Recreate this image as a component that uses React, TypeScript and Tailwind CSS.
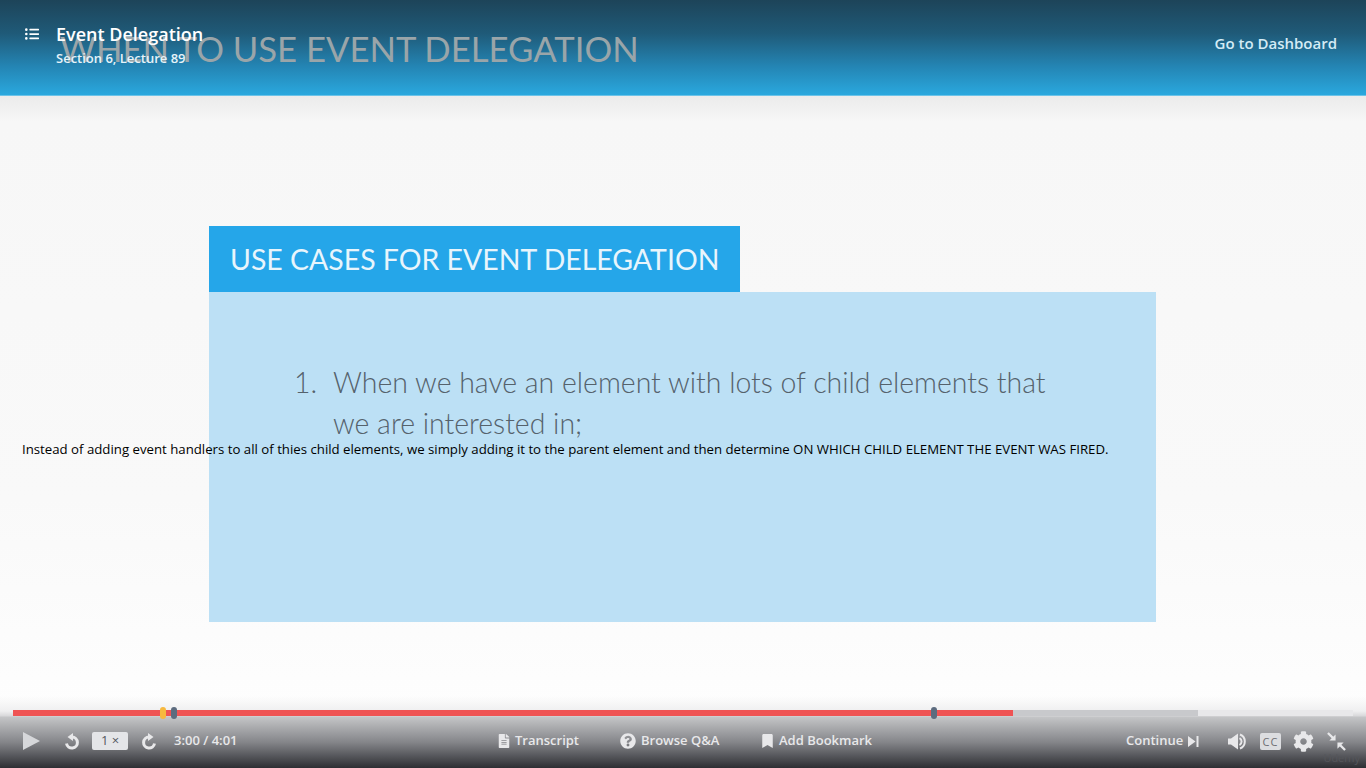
import React from 'react';
import { FaListUl, FaFileAlt, FaQuestionCircle, FaBookmark, FaCog } from 'react-icons/fa';

const sans = "font-['Open_Sans','Noto_Sans',sans-serif]";
const lato = "font-['Lato','Open_Sans',sans-serif]";

const Marker = ({ color, left }: { color: string; left: string }) => <span className={`absolute top-[-3px] w-[6px] h-[12px] rounded-[3px] ${color} ${left}`} />;

const ReplayIcon = ({ className }: { className: string }) => <svg viewBox="0 0 16 17" className={className} fill="none">
    <path d="M8 4 A5.5 5.5 0 1 1 2.5 10.5" stroke="#e8e8ea" strokeWidth="3" />
    <path d="M9 0 V8 L3.5 4 Z" fill="#e8e8ea" />
  </svg>;

const App = () => {
  return <div className={`relative w-[1366px] h-[768px] overflow-hidden flex flex-col bg-[#fafafa] ${sans}`}>
      <header className="relative h-[96px] shrink-0 flex items-start justify-between bg-[linear-gradient(to_bottom,#1d4459_0%,#1f5a78_35%,#2485b4_70%,#2aa8de_100%)] border-b border-[#6cc3e8]">
        <div className={`absolute left-[60px] top-[26px] text-[34.7px] leading-[45px] text-[#9aa5a9] whitespace-nowrap ${lato}`}>WHEN TO USE EVENT DELEGATION</div>
        <div className="relative flex pl-[25px] pt-[23px]">
          <FaListUl className="text-white w-[14px] h-[14px] mt-[4px]" />
          <div className="ml-[17px]">
            <div className="text-[18px] leading-[22px] font-semibold text-white">Event Delegation</div>
            <div className="text-[13px] leading-[16px] mt-[5px] font-semibold text-[#e6f3f9]">Section 6, Lecture 89</div>
          </div>
        </div>
        <div className="relative pr-[29px] pt-[33px] text-[15px] leading-[20px] font-semibold text-[#d4ebf5]">Go to Dashboard</div>
      </header>

      <main className="flex-1 pl-[209px] pt-[130px] bg-[linear-gradient(to_bottom,#ebebeb_0px,#f7f7f7_26px,#f9f9f9_60%,#ffffff_100%)]">
        <div className={`w-[531px] h-[66px] bg-[#25a6e9] flex items-center pl-[21px] text-[28.45px] text-[#e8f5fc] whitespace-nowrap ${lato}`}>USE CASES FOR EVENT DELEGATION</div>
        <div className={`w-[947px] h-[330px] bg-[#bce0f5] pt-[70px] pl-[85px] flex text-[28.45px] leading-[41px] font-light text-[#55626c] ${lato}`}>
          <span className="w-[39px]">1.</span>
          <p className="whitespace-nowrap">When we have an element with lots of child elements that<br />we are interested in;</p>
        </div>
      </main>

      <div className="absolute left-[22px] top-[440px] text-[13.22px] leading-[18px] text-black whitespace-nowrap font-['Open_Sans',sans-serif]">
        Instead of adding event handlers to all of thies child elements, we simply adding it to the parent element and then determine ON WHICH CHILD ELEMENT THE EVENT WAS FIRED.
      </div>

      <footer className="absolute left-0 right-0 bottom-0 h-[72px] bg-[linear-gradient(to_bottom,rgba(255,255,255,0)_0px,#efeff0_15px,#d8d8da_20px,#c4c5c7_21px,#85868a_46px,#2d2e33_72px)]">
        <div className="relative mx-[13px] mt-[14px] h-[6px] flex bg-[#e8e8ea]">
          <div className="w-[1000px] bg-[#ef5353]" />
          <div className="w-[185px] bg-[#c8c9cc]" />
          <Marker color="bg-[#f7b93e]" left="left-[147px]" />
          <Marker color="bg-[#5c6b7e]" left="left-[158px]" />
          <Marker color="bg-[#5c6b7e]" left="left-[918px]" />
        </div>

        <div className="flex items-center h-[20px] mt-[15px] pl-[23px] text-[#e8e8ea] text-[13px] font-semibold">
          <svg viewBox="0 0 17 20" className="w-[17px] h-[20px]"><path d="M0 1 L17 10 L0 19 Z" fill="#d6d7da" /></svg>
          <ReplayIcon className="ml-[24px] w-[16px] h-[17px]" />
          <div className="ml-[12px] w-[36px] h-[18px] rounded-[2px] bg-[#e4e5e8] text-[#55585f] flex items-center justify-center text-[13px] font-normal">1 ×</div>
          <ReplayIcon className="ml-[13px] w-[16px] h-[17px] -scale-x-100" />
          <span className="ml-[17px] w-[80px] whitespace-nowrap">3:00 / 4:01</span>

          <FaFileAlt className="ml-[244px] w-[12px] h-[14px]" />
          <span className="ml-[5px] w-[64px] whitespace-nowrap">Transcript</span>
          <FaQuestionCircle className="ml-[41px] w-[16px] h-[16px]" />
          <span className="ml-[5px] w-[78px] whitespace-nowrap">Browse Q&amp;A</span>
          <FaBookmark className="ml-[43px] w-[11px] h-[14px]" />
          <span className="ml-[6px] w-[94px] whitespace-nowrap">Add Bookmark</span>

          <span className="ml-[253px] w-[62px] whitespace-nowrap">Continue</span>
          <svg viewBox="0 0 11 11" className="w-[11px] h-[11px]"><path d="M0 0 L7.5 5.5 L0 11 Z M8.5 0 H10.5 V11 H8.5 Z" fill="#e8e8ea" /></svg>
          <svg viewBox="0 0 19 17" className="ml-[29px] w-[19px] h-[17px]" fill="none"><path d="M0 5.5 H3 L10 0.5 V16.5 L3 11.5 H0 Z" fill="#e8e8ea" /><path d="M11.5 5 a4 4 0 0 1 0 7" stroke="#e8e8ea" strokeWidth="2" /><path d="M12 1.5 a7.5 7.5 0 0 1 0 14" stroke="#e8e8ea" strokeWidth="2" /></svg>
          <div className="ml-[13px] w-[21px] h-[17px] rounded-[2px] bg-[#dcdde0] text-[#6d6e73] flex items-center justify-center text-[11px] tracking-[1px] leading-none font-normal">CC</div>
          <FaCog className="ml-[12px] w-[21px] h-[21px]" />
          <svg viewBox="0 0 20 20" className="ml-[13px] w-[19px] h-[19px]" fill="none"><path d="M1 1 L7 7" stroke="#e8e8ea" strokeWidth="2.4" /><path d="M9 2.5 V9 H2.5 Z" fill="#e8e8ea" /><path d="M19 19 L13 13" stroke="#e8e8ea" strokeWidth="2.4" /><path d="M11 17.5 V11 H17.5 Z" fill="#e8e8ea" /></svg>
        </div>
      </footer>

      <div className="absolute right-[6px] bottom-[3px] text-[11px] leading-[14px] text-[#55565b]">Udemy</div>
    </div>;
};
export default App;
